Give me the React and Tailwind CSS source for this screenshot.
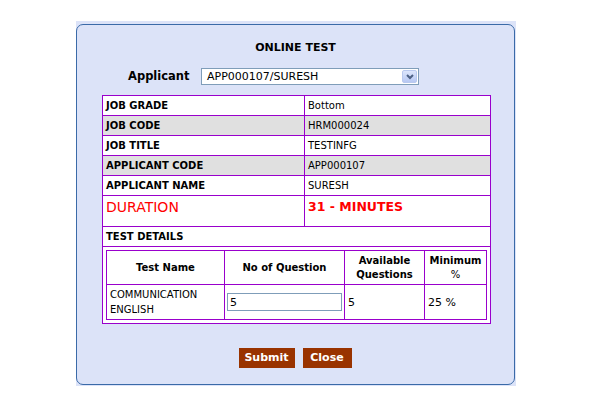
import React from "react";

const infoRows = [
  { label: "JOB GRADE", value: "Bottom", shade: false },
  { label: "JOB CODE", value: "HRM000024", shade: true },
  { label: "JOB TITLE", value: "TESTINFG", shade: false },
  { label: "APPLICANT CODE", value: "APP000107", shade: true },
  { label: "APPLICANT NAME", value: "SURESH", shade: false },
];

function SelectBox() {
  return (
    <div className="flex h-[17px] w-[218px] items-center border border-[#7f9db9] bg-white">
      <span className="pl-[5px] text-[11px] leading-[15px] text-black">APP000107/SURESH</span>
      <div className="ml-auto mr-[1px] flex h-[13px] w-[15px] items-center justify-center rounded-[2px] border border-[#b9c9ef] bg-gradient-to-b from-[#dde6fc] to-[#b7c8f3]">
        <svg width="8" height="6" viewBox="0 0 8 6">
          <path d="M1 1 L4 4 L7 1" fill="none" stroke="#4d6185" strokeWidth="2" />
        </svg>
      </div>
    </div>
  );
}

function App() {
  const cell = "border border-[#9900cc] px-[3px] text-[10px] leading-[13px] h-[20px]";

  return (
    <div className="h-[400px] w-[600px] overflow-hidden bg-white pt-[21px] font-['Verdana','DejaVu_Sans',sans-serif] text-black">
      <div className="ml-[76px] w-[440px] bg-[#dce3f8] pb-[1px] pr-[1px] pt-[3px]">
        <div className="h-[361px] rounded-[7px] border border-[#3a6aa8]">
          <div className="pt-[16px] text-center text-[11px] font-bold leading-[14px]">ONLINE TEST</div>

          <div className="mt-[13px] flex items-center pl-[51px]">
            <div className="w-[73px] text-[11.5px] font-bold leading-[15px]">Applicant</div>
            <SelectBox />
          </div>

          <table className="ml-[25px] mt-[10px] w-[389px] border-collapse border border-[#9900cc] bg-white">
            <tbody>
              {infoRows.map((r) => (
                <tr key={r.label} className={r.shade ? "bg-[#e0e0e0]" : ""}>
                  <td className={cell + " w-[202px] font-bold"}>{r.label}</td>
                  <td className={cell}>{r.value}</td>
                </tr>
              ))}
              <tr>
                <td className="h-[31px] border border-[#9900cc] px-[3px] pt-[3px] align-top text-[14px] leading-[16px] text-[#ff0000]">
                  DURATION
                </td>
                <td className="h-[31px] border border-[#9900cc] px-[3px] pt-[3px] align-top text-[12.5px] font-bold leading-[16px] text-[#ff0000]">
                  31 - MINUTES
                </td>
              </tr>
              <tr>
                <td colSpan={2} className={cell + " font-bold"}>
                  TEST DETAILS
                </td>
              </tr>
              <tr>
                <td colSpan={2} className="border border-[#9900cc] p-[3px]">
                  <table className="w-[381px] border-collapse border border-[#9900cc] text-[10px]">
                    <tbody>
                      <tr className="h-[34px] text-center font-bold leading-[14px]">
                        <td className="w-[118px] border border-[#9900cc]">Test Name</td>
                        <td className="w-[120px] border border-[#9900cc]">No of Question</td>
                        <td className="w-[80px] border border-[#9900cc]">
                          Available
                          <br />
                          Questions
                        </td>
                        <td className="border border-[#9900cc]">
                          Minimum
                          <br />
                          <span className="font-normal">%</span>
                        </td>
                      </tr>
                      <tr className="h-[35px] leading-[15px]">
                        <td className="border border-[#9900cc] px-[3px]">
                          COMMUNICATION
                          <br />
                          ENGLISH
                        </td>
                        <td className="border border-[#9900cc] px-[2px]">
                          <div className="flex h-[18px] w-[115px] items-center border border-[#7f9db9] bg-white pl-[2px] text-[11px]">
                            5
                          </div>
                        </td>
                        <td className="border border-[#9900cc] px-[3px] text-[11px]">5</td>
                        <td className="border border-[#9900cc] px-[3px] text-[11px]">25 %</td>
                      </tr>
                    </tbody>
                  </table>
                </td>
              </tr>
            </tbody>
          </table>

          <div className="mt-[24px] flex justify-center gap-[8px] pr-[1px]">
            <button className="h-[20px] w-[56px] bg-[#993300] text-[11px] font-bold leading-[20px] text-white">
              Submit
            </button>
            <button className="h-[20px] w-[49px] bg-[#993300] text-[11px] font-bold leading-[20px] text-white">
              Close
            </button>
          </div>
        </div>
      </div>
    </div>
  );
}

export default App;
